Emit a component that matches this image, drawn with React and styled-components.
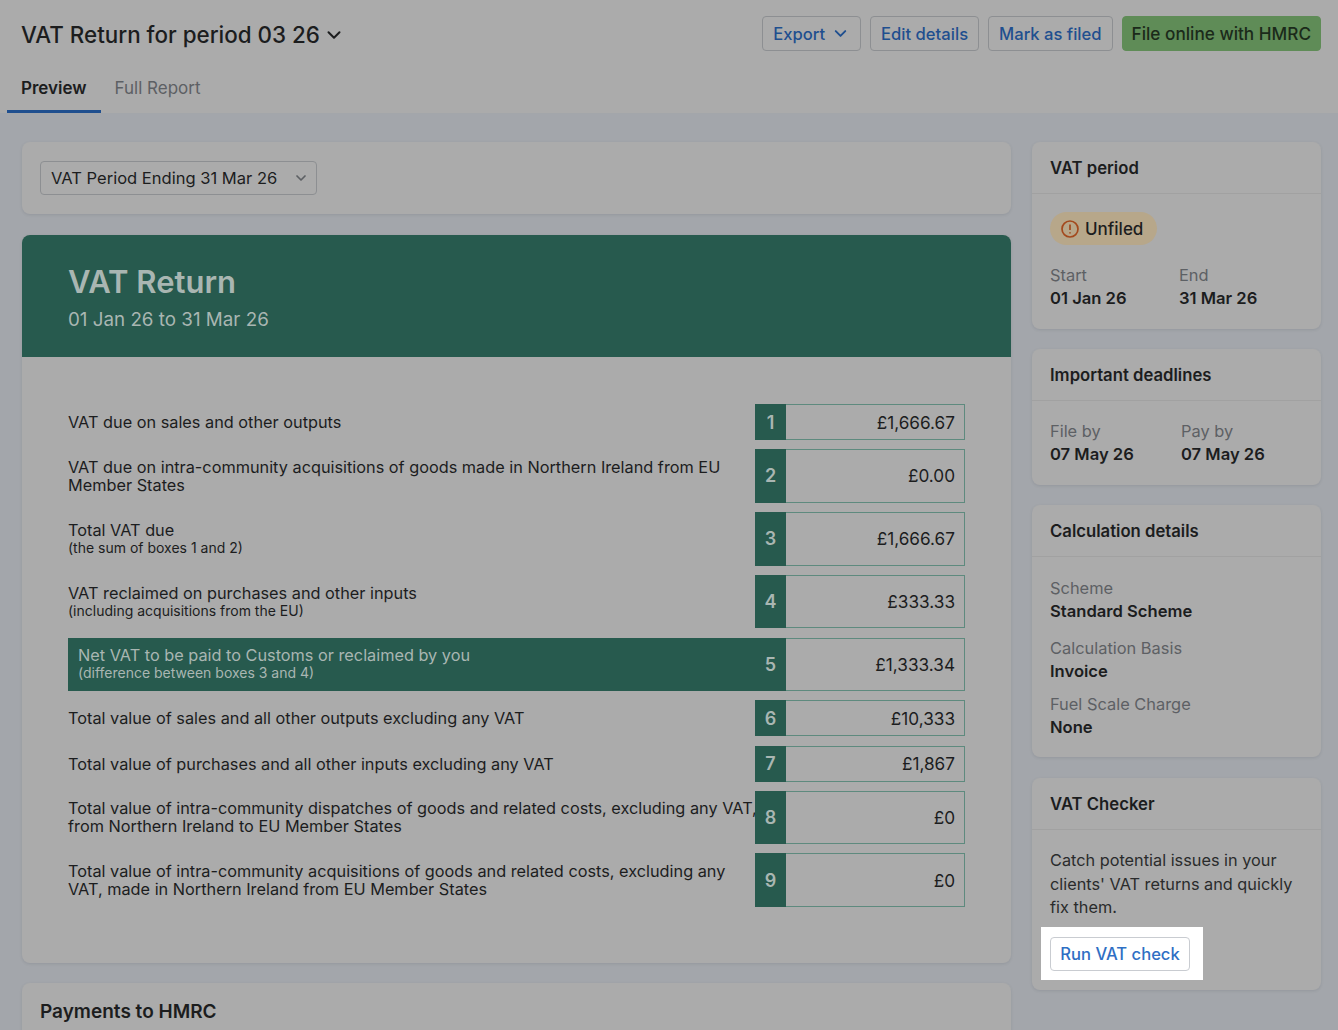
import React from "react";
import styled, { createGlobalStyle } from "styled-components";
import { ChevronDown } from "lucide-react";

const GlobalStyle = createGlobalStyle`
  html, body {
    margin: 0;
    height: 1030px;
    overflow: hidden;
    background: #a3a6ab;
    font-family: "Inter", "Liberation Sans", sans-serif;
    color: #1c1d1e;
  }
  * { box-sizing: border-box; }
`;

const Page = styled.div`
  height: 1030px;
  overflow: hidden;
`;

// Top bar
const Header = styled.header`
  height: 114px;
  background: #ababab;
  border-bottom: 1px solid #a3a6aa;
  display: flex;
  flex-direction: column;
`;

const TitleRow = styled.div`
  height: 66px;
  padding: 16px 17px 0 21px;
  display: flex;
  justify-content: space-between;
  align-items: flex-start;
`;

const Title = styled.h1`
  margin: 4px 0 0;
  font-size: 22.4px;
  line-height: 30px;
  font-weight: 500;
  display: flex;
  align-items: center;
  gap: 3px;
`;

const Actions = styled.div`
  display: flex;
  gap: 9px;
`;

const Button = styled.button`
  height: 35px;
  padding: 0 ${(p) => (p.$primary ? 9 : 10)}px;
  font: 500 ${(p) => (p.$primary ? "17.2px" : "16.6px")} "Inter", sans-serif;
  color: ${(p) => (p.$primary ? "#1b2a1a" : "#1f4f8f")};
  background: ${(p) => (p.$primary ? "#5f8c57" : "transparent")};
  border: 1px solid ${(p) => (p.$primary ? "#5f8c57" : "#8d8f92")};
  border-radius: 4px;
  display: flex;
  align-items: center;
  gap: 6px;
  white-space: nowrap;
`;

const Tabs = styled.nav`
  display: flex;
  padding-left: 7px;
  height: 47px;
`;

const Tab = styled.div`
  padding: 11px 14px 0;
  font-size: 17px;
  line-height: 22px;
  font-weight: ${(p) => (p.$active ? 600 : 400)};
  color: ${(p) => (p.$active ? "#1c1d1e" : "#5d6064")};
  border-bottom: 3px solid ${(p) => (p.$active ? "#1f4f8f" : "transparent")};
`;

// Page columns
const Content = styled.main`
  display: grid;
  grid-template-columns: 989px 289px;
  gap: 21px;
  padding: 28px 17px 0 22px;
`;

const Column = styled.div`
  display: flex;
  flex-direction: column;
  gap: 20px;
`;

const Card = styled.section`
  background: #ababab;
  border-radius: 8px;
  box-shadow: 0 1px 3px rgba(60, 65, 75, 0.14);
  overflow: ${(p) => (p.$clip ? "hidden" : "visible")};
  margin-top: ${(p) => p.$nudge || 0}px;
`;

const PeriodBar = styled.div`
  height: 72px;
  padding: 19px 18px;
`;

const Select = styled.div`
  width: 277px;
  height: 34px;
  padding: 0 7px 0 10px;
  border: 1px solid #8d8f92;
  border-radius: 4px;
  display: flex;
  align-items: center;
  justify-content: space-between;
  font-size: 16.55px;
  color: #1c1d1e;
  white-space: nowrap;
`;

// Return panel
const Banner = styled.div`
  height: 122px;
  padding: 27px 46px 0;
  background: #275a4e;
  color: #a9b6b2;
`;

const BannerTitle = styled.h2`
  margin: 0;
  font-size: 31px;
  line-height: 40px;
  font-weight: 600;
`;

const BannerDates = styled.div`
  margin-top: 5px;
  font-size: 18.8px;
  line-height: 26px;
`;

const Rows = styled.div`
  padding: 47px 46px 55.8px;
  display: flex;
  flex-direction: column;
  gap: 9.2px;
`;

const Row = styled.div`
  display: grid;
  grid-template-columns: 687px 31px 179px;
  min-height: ${(p) => (p.$tall ? 53.6 : 36)}px;
  align-items: stretch;
`;

const Label = styled.div`
  display: flex;
  flex-direction: column;
  justify-content: center;
  font-size: 16.3px;
  line-height: 18px;
  white-space: nowrap;
  padding-left: ${(p) => (p.$highlight ? 10 : 0)}px;
  background: ${(p) => (p.$highlight ? "#275a4e" : "transparent")};
  color: ${(p) => (p.$highlight ? "#a9b6b2" : "#1c1d1e")};
`;

const Hint = styled.span`
  font-size: 14px;
`;

const BoxNumber = styled.div`
  background: #275a4e;
  color: #a9b6b2;
  font-size: 18px;
  font-weight: 600;
  display: flex;
  align-items: center;
  justify-content: center;
`;

const Amount = styled.div`
  border: 1.5px solid #5e8a7e;
  border-left: none;
  padding-right: 9px;
  display: flex;
  align-items: center;
  justify-content: flex-end;
  font-size: 17.2px;
  color: #1c1d1e;
`;

const SectionTitle = styled.div`
  padding: 17px 18px;
  font-size: 19px;
  line-height: 24px;
  font-weight: 600;
`;

// Side cards
const SideHead = styled.div`
  height: 52px;
  padding: 0 18px;
  display: flex;
  align-items: center;
  border-bottom: 1px solid #a1a1a1;
  font-size: 16.7px;
  font-weight: 600;
`;

const SideBody = styled.div`
  padding: ${(p) => p.$pad || "18px 18px 19px"};
`;

const Badge = styled.span`
  display: inline-flex;
  align-items: center;
  gap: 5px;
  height: 33px;
  padding: 0 14px 0 10px;
  border-radius: 17px;
  background: #b7a78a;
  font-size: 17px;
  font-weight: 500;
`;

const FieldGrid = styled.div`
  display: grid;
  grid-template-columns: ${(p) => p.$first || "129px"} 1fr;
  margin-top: ${(p) => p.$top || 0}px;
`;

const Field = styled.div`
  display: flex;
  flex-direction: column;
  margin-bottom: ${(p) => p.$gap || 0}px;
`;

const FieldName = styled.span`
  font-size: 16.4px;
  line-height: 23px;
  color: #5d6064;
`;

const FieldValue = styled.span`
  font-size: 16.6px;
  line-height: 23px;
  font-weight: 600;
  color: #1c1d1e;
`;

const Blurb = styled.p`
  margin: 0;
  font-size: 16.3px;
  line-height: 23.5px;
  color: #2a2b2c;
`;

const Spotlight = styled.div`
  width: 162px;
  margin: 7px 0 0 -9px;
  padding: 10px 9px 9px;
  background: #ffffff;
`;

const CheckButton = styled.button`
  display: block;
  width: 140px;
  height: 34px;
  padding: 0;
  background: #ffffff;
  border: 1px solid #c9ccd1;
  border-radius: 4px;
  color: #2f6fc4;
  font: 500 16.6px "Inter", sans-serif;
  white-space: nowrap;
`;

const vatRows = [
  { n: 1, label: ["VAT due on sales and other outputs"], amount: "£1,666.67" },
  {
    n: 2,
    tall: true,
    label: ["VAT due on intra-community acquisitions of goods made in Northern Ireland from EU", "Member States"],
    amount: "£0.00",
  },
  { n: 3, tall: true, label: ["Total VAT due"], hint: "(the sum of boxes 1 and 2)", amount: "£1,666.67" },
  {
    n: 4,
    tall: true,
    label: ["VAT reclaimed on purchases and other inputs"],
    hint: "(including acquisitions from the EU)",
    amount: "£333.33",
  },
  {
    n: 5,
    tall: true,
    highlight: true,
    label: ["Net VAT to be paid to Customs or reclaimed by you"],
    hint: "(difference between boxes 3 and 4)",
    amount: "£1,333.34",
  },
  { n: 6, label: ["Total value of sales and all other outputs excluding any VAT"], amount: "£10,333" },
  { n: 7, label: ["Total value of purchases and all other inputs excluding any VAT"], amount: "£1,867" },
  {
    n: 8,
    tall: true,
    label: ["Total value of intra-community dispatches of goods and related costs, excluding any VAT,", "from Northern Ireland to EU Member States"],
    amount: "£0",
  },
  {
    n: 9,
    tall: true,
    label: ["Total value of intra-community acquisitions of goods and related costs, excluding any", "VAT, made in Northern Ireland from EU Member States"],
    amount: "£0",
  },
];

const WarningIcon = () => (
  <svg width="20" height="20" viewBox="0 0 20 20" fill="none" stroke="#a3491d" strokeWidth="1.7">
    <circle cx="10" cy="10" r="8" />
    <path d="M10 5.5v5.5" />
    <path d="M10 13.2v1.4" />
  </svg>
);

const App = () => {
  return (
    <Page>
      <GlobalStyle />
      <Header>
        <TitleRow>
          <Title>
            VAT Return for period 03 26 <ChevronDown size={22} strokeWidth={2.2} />
          </Title>
          <Actions>
            <Button>
              Export <ChevronDown size={19} strokeWidth={2.4} />
            </Button>
            <Button>Edit details</Button>
            <Button>Mark as filed</Button>
            <Button $primary>File online with HMRC</Button>
          </Actions>
        </TitleRow>
        <Tabs>
          <Tab $active>Preview</Tab>
          <Tab>Full Report</Tab>
        </Tabs>
      </Header>

      <Content>
        <Column>
          <Card>
            <PeriodBar>
              <Select>
                VAT Period Ending 31 Mar 26
                <ChevronDown size={16} strokeWidth={2.6} color="#5d6064" />
              </Select>
            </PeriodBar>
          </Card>

          <Card $clip $nudge={1}>
            <Banner>
              <BannerTitle>VAT Return</BannerTitle>
              <BannerDates>01 Jan 26 to 31 Mar 26</BannerDates>
            </Banner>
            <Rows>
              {vatRows.map((row) => (
                <Row key={row.n} $tall={row.tall}>
                  <Label $highlight={row.highlight}>
                    {row.label.map((line) => (
                      <span key={line}>{line}</span>
                    ))}
                    {row.hint && <Hint>{row.hint}</Hint>}
                  </Label>
                  <BoxNumber>{row.n}</BoxNumber>
                  <Amount>{row.amount}</Amount>
                </Row>
              ))}
            </Rows>
          </Card>

          <Card>
            <SectionTitle>Payments to HMRC</SectionTitle>
          </Card>
        </Column>

        <Column>
          <Card>
            <SideHead>VAT period</SideHead>
            <SideBody>
              <Badge>
                <WarningIcon /> Unfiled
              </Badge>
              <FieldGrid $top={19}>
                <Field>
                  <FieldName>Start</FieldName>
                  <FieldValue>01 Jan 26</FieldValue>
                </Field>
                <Field>
                  <FieldName>End</FieldName>
                  <FieldValue>31 Mar 26</FieldValue>
                </Field>
              </FieldGrid>
            </SideBody>
          </Card>

          <Card>
            <SideHead>Important deadlines</SideHead>
            <SideBody $pad="19px 18px 19px">
              <FieldGrid $first="131px">
                <Field>
                  <FieldName>File by</FieldName>
                  <FieldValue>07 May 26</FieldValue>
                </Field>
                <Field>
                  <FieldName>Pay by</FieldName>
                  <FieldValue>07 May 26</FieldValue>
                </Field>
              </FieldGrid>
            </SideBody>
          </Card>

          <Card>
            <SideHead>Calculation details</SideHead>
            <SideBody $pad="20px 18px 18px">
              <Field $gap={14}>
                <FieldName>Scheme</FieldName>
                <FieldValue>Standard Scheme</FieldValue>
              </Field>
              <Field $gap={10}>
                <FieldName>Calculation Basis</FieldName>
                <FieldValue>Invoice</FieldValue>
              </Field>
              <Field>
                <FieldName>Fuel Scale Charge</FieldName>
                <FieldValue>None</FieldValue>
              </Field>
            </SideBody>
          </Card>

          <Card $nudge={1}>
            <SideHead>VAT Checker</SideHead>
            <SideBody $pad="19px 18px 10px">
              <Blurb>
                Catch potential issues in your
                <br />
                clients' VAT returns and quickly
                <br />
                fix them.
              </Blurb>
              <Spotlight>
                <CheckButton>Run VAT check</CheckButton>
              </Spotlight>
            </SideBody>
          </Card>
        </Column>
      </Content>
    </Page>
  );
};

export default App;
